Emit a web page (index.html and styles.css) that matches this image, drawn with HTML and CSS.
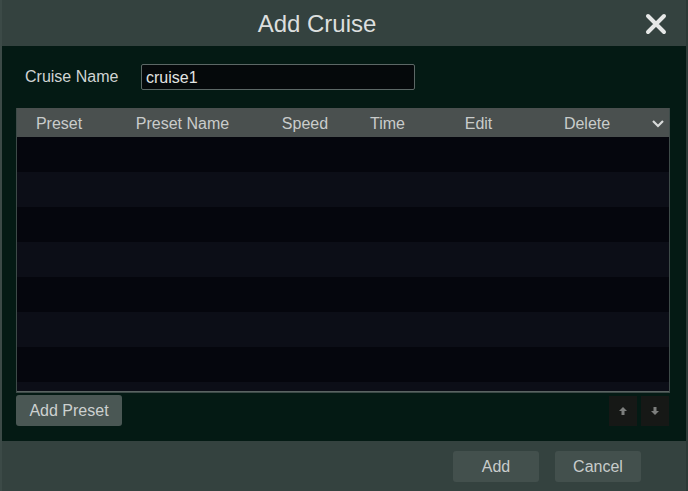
FILE: index.html
```html
<!DOCTYPE html>
<html lang="en">
<head>
    <meta charset="UTF-8">
    <title>Add Cruise</title>
    <link rel="stylesheet" href="styles.css">
</head>
<body>
    <div class="dialog">
        <div class="dialog-head">
            <span class="dialog-title">Add Cruise</span>
            <span class="close-btn">
                <svg width="22" height="22" viewBox="0 0 22 22"><path d="M3 3 L19 19 M19 3 L3 19" stroke="#e6e8e7" stroke-width="4" stroke-linecap="round"/></svg>
            </span>
        </div>
        <div class="dialog-body">
            <div class="name-row">
                <label class="name-label">Cruise Name</label>
                <div class="name-input">cruise1</div>
            </div>
            <div class="grid">
                <div class="grid-head">
                    <div class="col c-preset">Preset</div>
                    <div class="col c-name">Preset Name</div>
                    <div class="col c-speed">Speed</div>
                    <div class="col c-time">Time</div>
                    <div class="col c-edit">Edit</div>
                    <div class="col c-del">Delete</div>
                    <div class="col c-more">
                        <svg width="14" height="10" viewBox="0 0 14 10"><path d="M2 2 L7 7 L12 2" fill="none" stroke="#d8dbda" stroke-width="2.2"/></svg>
                    </div>
                </div>
                <div class="grid-rows">
                    <div class="grid-row"></div>
                    <div class="grid-row"></div>
                    <div class="grid-row"></div>
                    <div class="grid-row"></div>
                    <div class="grid-row"></div>
                    <div class="grid-row"></div>
                    <div class="grid-row"></div>
                    <div class="grid-row"></div>
                </div>
            </div>
            <div class="tools">
                <div class="btn add-preset">Add Preset</div>
                <div class="arrows">
                    <div class="arrow-btn">
                        <svg width="10" height="10" viewBox="0 0 10 10"><path d="M5 1 L9 5 L6.5 5 L6.5 9 L3.5 9 L3.5 5 L1 5 Z" fill="#7c7e7d"/></svg>
                    </div>
                    <div class="arrow-btn">
                        <svg width="10" height="10" viewBox="0 0 10 10"><path d="M5 9 L9 5 L6.5 5 L6.5 1 L3.5 1 L3.5 5 L1 5 Z" fill="#7c7e7d"/></svg>
                    </div>
                </div>
            </div>
        </div>
        <div class="dialog-foot">
            <div class="btn foot-btn">Add</div>
            <div class="btn foot-btn">Cancel</div>
        </div>
    </div>
</body>
</html>
```

FILE: styles.css
```css
body {
    margin: 0;
    font-family: "Liberation Sans", Arial, sans-serif;
    background-color: #04140f;
}
.dialog {
    width: 688px;
    height: 491px;
    display: flex;
    flex-direction: column;
    border-left: 2px solid #3c4a47;
    border-right: 2px solid #2c3a37;
    box-sizing: border-box;
}
.dialog-head {
    height: 46px;
    background-color: #34423f;
    display: flex;
    align-items: center;
    justify-content: center;
    position: relative;
}
.dialog-title {
    color: #dcdfde;
    font-size: 24px;
    margin-left: -54px;
    padding-top: 2px;
}
.close-btn {
    position: absolute;
    right: 19px;
    top: 13px;
    line-height: 0;
}
.dialog-body {
    flex: 1;
    background-color: #041a14;
    padding: 17px 16px 0 14px;
}
.name-row {
    display: flex;
    align-items: center;
    height: 28px;
}
.name-label {
    color: #d0d4d3;
    font-size: 16px;
    width: 116px;
    padding-left: 9px;
}
.name-input {
    width: 268px;
    height: 24px;
    background-color: #05090b;
    border: 1px solid #5c6866;
    border-radius: 2px;
    color: #e2e4e3;
    font-size: 16px;
    line-height: 25px;
    padding-left: 4px;
}
.grid {
    margin-top: 17px;
    border: 1px solid #3d4a48;
    border-top: none;
}
.grid-head {
    height: 29px;
    background-color: #4a504f;
    display: flex;
    align-items: center;
    color: #c9cccb;
    font-size: 16px;
}
.col {
    text-align: center;
    padding-top: 2px;
}
.c-preset { width: 84px; }
.c-name { width: 163px; }
.c-speed { width: 82px; }
.c-time { width: 83px; }
.c-edit { width: 99px; }
.c-del { width: 118px; }
.c-more {
    flex: 1;
    line-height: 0;
    padding-top: 3px;
}
.grid-rows {
    height: 254px;
    overflow: hidden;
    border-bottom: 1px solid #5a6462;
}
.grid-row {
    height: 35px;
    background-color: #05060d;
}
.grid-row:nth-child(even) {
    background-color: #0c0e17;
}
.tools {
    display: flex;
    justify-content: space-between;
    align-items: center;
    margin-top: 2px;
}
.btn {
    background-color: #4a5754;
    color: #cdd1d0;
    font-size: 16px;
    border-radius: 3px;
    text-align: center;
}
.add-preset {
    width: 106px;
    height: 31px;
    line-height: 32px;
}
.arrows {
    display: flex;
    gap: 4px;
    margin-right: 1px;
}
.arrow-btn {
    width: 28px;
    height: 30px;
    background-color: #161816;
    display: flex;
    align-items: center;
    justify-content: center;
}
.dialog-foot {
    height: 50px;
    background-color: #34423f;
    display: flex;
    justify-content: flex-end;
    align-items: center;
    gap: 16px;
    padding-right: 45px;
}
.foot-btn {
    width: 86px;
    height: 31px;
    line-height: 32px;
    background-color: #43504d;
    color: #c8cccb;
}
```
